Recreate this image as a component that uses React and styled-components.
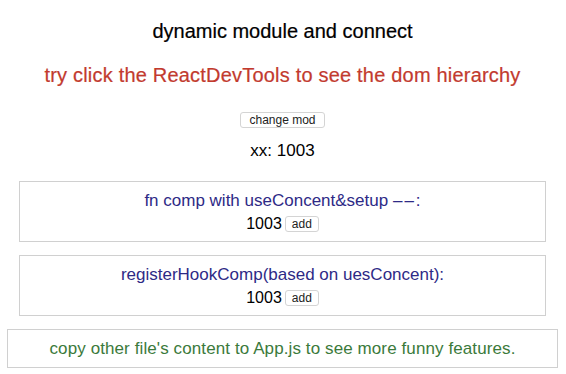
import React from "react";
import styled, { createGlobalStyle } from "styled-components";

const Global = createGlobalStyle`
  html, body { margin: 0; padding: 0; background: #fff; }
  body { font-family: "Liberation Sans", Arial, sans-serif; color: #000; }
`;

const Page = styled.div`
  display: flex;
  flex-direction: column;
  align-items: stretch;
  padding: 19px 8px 0 7px;
  text-align: center;
`;

const Title = styled.div`
  font-size: 20px;
  line-height: 24px;
  letter-spacing: ${(p) => p.$ls || 0}px;
  color: ${(p) => p.$color || "#000"};
  margin-top: ${(p) => p.$mt || 0}px;
  -webkit-text-stroke: 0.2px currentColor;
`;

const SmallButton = styled.button`
  font-family: "Liberation Sans", Arial, sans-serif;
  font-size: 12px;
  line-height: 14px;
  height: 16px;
  padding: 0 ${(p) => p.$px || 6}px;
  margin: 0;
  border: 1px solid #d4d4d4;
  border-radius: 3px;
  background: #fff;
  color: #222;
`;

const ButtonRow = styled.div`
  margin-top: 25px;
  height: 16px;
  display: flex;
  justify-content: center;
`;

const Value = styled.div`
  font-size: 17px;
  line-height: 22px;
  margin-top: 12px;
`;

const Inner = styled.div`
  display: flex;
  flex-direction: column;
  gap: 13px;
  margin: 19px 12px 0 12px;
`;

const Card = styled.div`
  border: 1px solid #d0d0d0;
  padding: 7px 0 6px;
  font-size: 16px;
  line-height: 23px;
`;

const CardTitle = styled.div`
  color: #2e2a86;
  font-size: 17px;
`;

const Dashes = styled.span`
  letter-spacing: 2px;
`;

const CountRow = styled.div`
  display: flex;
  justify-content: center;
  align-items: center;
  gap: 3px;
`;

const Footer = styled.div`
  border: 1px solid #d0d0d0;
  margin-top: 13px;
  padding: 8px 0;
  font-size: 17px;
  line-height: 21px;
  letter-spacing: 0.1px;
  color: #3b7a3b;
`;

function Counter({ title, dashes }) {
  return (
    <Card>
      <CardTitle>
        {title}
        {dashes && (
          <>
            {" "}
            <Dashes>––</Dashes>:
          </>
        )}
      </CardTitle>
      <CountRow>
        <span>1003</span>
        <SmallButton>add</SmallButton>
      </CountRow>
    </Card>
  );
}

export default function App() {
  return (
    <>
      <Global />
      <Page>
        <Title>dynamic module and connect</Title>
        <Title $color="#c23a2e" $mt={20} $ls={0.2}>
          try click the ReactDevTools to see the dom hierarchy
        </Title>
        <ButtonRow>
          <SmallButton $px={8}>change mod</SmallButton>
        </ButtonRow>
        <Value>xx: 1003</Value>
        <Inner>
          <Counter title="fn comp with useConcent&setup" dashes />
          <Counter title="registerHookComp(based on uesConcent):" />
        </Inner>
        <Footer>copy other file's content to App.js to see more funny features.</Footer>
      </Page>
    </>
  );
}
